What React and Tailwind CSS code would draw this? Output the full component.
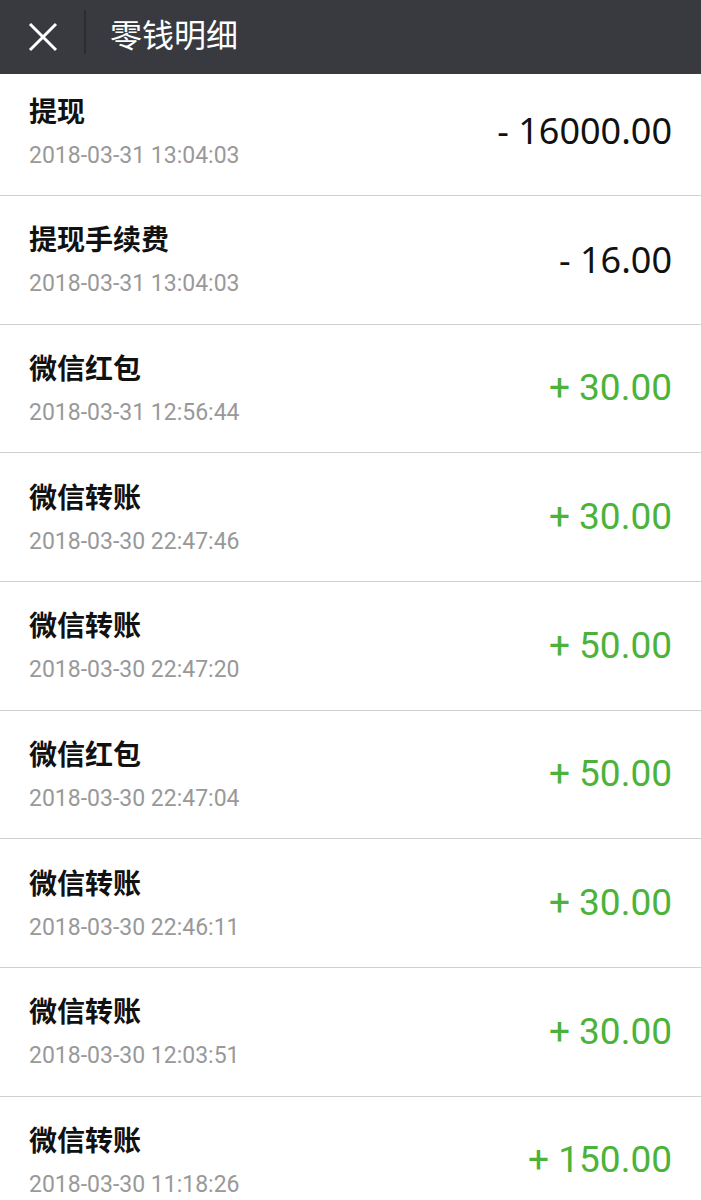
import React from "react";

const records = [
  { title: "提现", time: "2018-03-31 13:04:03", amount: "- 16000.00", income: false },
  { title: "提现手续费", time: "2018-03-31 13:04:03", amount: "- 16.00", income: false },
  { title: "微信红包", time: "2018-03-31 12:56:44", amount: "+ 30.00", income: true },
  { title: "微信转账", time: "2018-03-30 22:47:46", amount: "+ 30.00", income: true },
  { title: "微信转账", time: "2018-03-30 22:47:20", amount: "+ 50.00", income: true },
  { title: "微信红包", time: "2018-03-30 22:47:04", amount: "+ 50.00", income: true },
  { title: "微信转账", time: "2018-03-30 22:46:11", amount: "+ 30.00", income: true },
  { title: "微信转账", time: "2018-03-30 12:03:51", amount: "+ 30.00", income: true },
  { title: "微信转账", time: "2018-03-30 11:18:26", amount: "+ 150.00", income: true },
];

const Row = ({ item, first }) => (
  <div
    className={
      "flex items-center justify-between px-[29px] border-b border-[#d0d0d0] " +
      (first ? "h-[122px] pb-[4px]" : "h-[128.67px] pt-[3px]")
    }
  >
    <div className="flex flex-col">
      <p className="text-[28px] leading-[36px] font-bold text-[#111] font-['Noto_Sans_CJK_SC',sans-serif]">
        {item.title}
      </p>
      <p className="mt-[10px] text-[23px] leading-[36px] text-[#999] font-['Roboto',sans-serif]">
        {item.time}
      </p>
    </div>
    {item.income ? (
      <p className="-mt-[3px] text-[37px] leading-[44px] text-[#4bb33a] font-['Roboto',sans-serif]">
        {item.amount}
      </p>
    ) : (
      <p className="-mt-[3px] text-[36px] leading-[44px] text-[#111] font-['Noto_Sans',sans-serif]">
        {item.amount}
      </p>
    )}
  </div>
);

const App = () => {
  return (
    <div className="w-full bg-white">
      <div className="h-[74px] bg-[#393a3f] flex items-center">
        <div className="w-[84px] flex items-center justify-center pl-[2px]">
          <svg width="30" height="30" viewBox="0 0 30 30">
            <path d="M2 2 L28 28 M28 2 L2 28" stroke="#fff" strokeWidth="3" fill="none" />
          </svg>
        </div>
        <div className="w-[2px] h-[44px] bg-[#2c2d31] -mt-[10px]" />
        <h1 className="ml-[24px] text-[32px] leading-[40px] text-white font-['Noto_Sans_CJK_SC',sans-serif] -mt-[8px]">
          零钱明细
        </h1>
      </div>
      {records.map((item, i) => (
        <Row key={i} item={item} first={i === 0} />
      ))}
    </div>
  );
};

export default App;
